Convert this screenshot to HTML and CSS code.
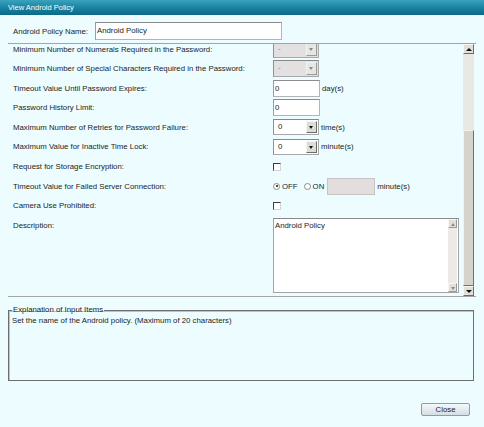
FILE: index.html
```html
<!DOCTYPE html>
<html>
<head>
<meta charset="utf-8">
<link rel="stylesheet" href="styles.css">
</head>
<body>
<div class="window">
  <div class="titlebar">View Android Policy</div>
  <div class="name-row">
    <span class="name-lbl">Android Policy Name:</span>
    <span class="field name-field">Android Policy</span>
  </div>
  <div class="panel">
    <div class="viewport">
      <div class="rows">
        <div class="row"><span class="lbl">Minimum Number of Numerals Required in the Password:</span><span class="sel disabled"><span class="val">-</span><span class="arrow"></span></span></div>
        <div class="row"><span class="lbl">Minimum Number of Special Characters Required in the Password:</span><span class="sel disabled"><span class="val">-</span><span class="arrow"></span></span></div>
        <div class="row"><span class="lbl">Timeout Value Until Password Expires:</span><span class="field num">0</span><span class="unit">day(s)</span></div>
        <div class="row"><span class="lbl">Password History Limit:</span><span class="field num">0</span></div>
        <div class="row"><span class="lbl">Maximum Number of Retries for Password Failure:</span><span class="sel"><span class="val">0</span><span class="arrow"></span></span><span class="unit">time(s)</span></div>
        <div class="row"><span class="lbl">Maximum Value for Inactive Time Lock:</span><span class="sel"><span class="val">0</span><span class="arrow"></span></span><span class="unit">minute(s)</span></div>
        <div class="row"><span class="lbl">Request for Storage Encryption:</span><span class="check"></span></div>
        <div class="row"><span class="lbl">Timeout Value for Failed Server Connection:</span><span class="radio on"></span><span class="rlbl">OFF</span><span class="radio"></span><span class="rlbl">ON</span><span class="field grey"></span><span class="unit">minute(s)</span></div>
        <div class="row"><span class="lbl">Camera Use Prohibited:</span><span class="check"></span></div>
        <div class="row desc-row"><span class="lbl">Description:</span>
          <div class="textarea">
            <div class="ta-text">Android Policy</div>
            <div class="ta-scroll"><span class="sbtn up small"></span><span class="ta-track"></span><span class="sbtn down small"></span></div>
          </div>
        </div>
      </div>
    </div>
    <div class="vscroll">
      <span class="sbtn up"></span>
      <span class="track"></span>
      <span class="thumb"></span>
      <span class="sbtn down"></span>
    </div>
  </div>
  <fieldset class="explain">
    <legend>Explanation of Input Items</legend>
    <p>Set the name of the Android policy. (Maximum of 20 characters)</p>
  </fieldset>
  <div class="actions"><span class="btn">Close</span></div>
</div>
</body>
</html>
```
FILE: styles.css
```css
* { box-sizing: border-box; }
html, body { margin: 0; padding: 0; }
body {
  width: 484px;
  height: 427px;
  overflow: hidden;
  font-family: "Liberation Sans", Arial, sans-serif;
  font-size: 7.8px;
  color: #1c1c1c;
}
.window {
  width: 484px;
  height: 427px;
  background: #ecfcff;
  display: flex;
  flex-direction: column;
}
.titlebar {
  height: 15px;
  flex: none;
  background: linear-gradient(#3aa2bc, #1a84a2 50%, #0b6888);
  color: #fff;
  padding-left: 8px;
  line-height: 15px;
  font-size: 7.5px;
}
.name-row {
  display: flex;
  align-items: center;
  height: 28px;
  padding-top: 7px;
  padding-bottom: 3px;
  padding-left: 13px;
}
.name-lbl { width: 82px; flex: none; }
.field {
  display: inline-block;
  background: #fff;
  border: 1px solid #b4b4b4;
  border-top-color: #8c8c8c;
  border-left-color: #9c9c9c;
  padding-left: 1px;
  line-height: 15px;
}
.name-field { width: 187px; height: 18px; line-height: 16px; }
.panel {
  margin: 0 8px;
  height: 254px;
  flex: none;
  border-top: 1px solid #a4a4a4;
  border-bottom: 1px solid #a4a4a4;
  display: flex;
}
.viewport {
  flex: 1;
  overflow: hidden;
}
.rows { margin-top: -4.8px; }
.row {
  display: flex;
  align-items: center;
  height: 19.6px;
}
.lbl { width: 265px; flex: none; padding-left: 5px; white-space: nowrap; }
.num { width: 47px; height: 17px; }
.unit { margin-left: 2px; }
.sel {
  display: inline-flex;
  width: 46px;
  height: 16px;
  background: #fff;
  border: 1px solid #a8a8a8;
  border-top-color: #888;
  border-left-color: #909090;
}
.sel .val { flex: 1; padding-left: 4px; line-height: 14px; }
.sel .arrow {
  width: 11px;
  margin: 1px 1px 1px 0;
  background: #dedcd6;
  border: 1px solid #f4f4f4;
  border-right-color: #6c6c6c;
  border-bottom-color: #6c6c6c;
  position: relative;
}
.sel .arrow::after {
  content: "";
  position: absolute;
  left: 2px;
  top: 4px;
  border-left: 2.5px solid transparent;
  border-right: 2.5px solid transparent;
  border-top: 3px solid #111;
}
.sel.disabled { height: 17px; background: #e2e0e0; }
.sel.disabled .val { color: #8a8a8a; }
.sel.disabled .arrow { background: #e8e6e2; border-right-color: #9a9a9a; border-bottom-color: #9a9a9a; }
.sel.disabled .arrow::after { border-top-color: #8a8a8a; }
.check {
  width: 8px;
  height: 8px;
  background: #fff;
  border: 1px solid #d4d4d4;
  border-top-color: #3c3c3c;
  border-left-color: #3c3c3c;
}
.radio {
  width: 7px;
  height: 7px;
  border-radius: 50%;
  border: 1px solid #8a8a8a;
  background: #fff;
  position: relative;
}
.radio.on::after {
  content: "";
  position: absolute;
  left: 1.5px;
  top: 1.5px;
  width: 2px;
  height: 2px;
  border-radius: 50%;
  background: #111;
}
.rlbl { margin-left: 2px; margin-right: 6px; }
.grey { width: 48px; height: 17px; margin-left: -3px; background: #e2dede; border-color: #c8c4c4; }
.desc-row { height: auto; align-items: flex-start; }
.desc-row .lbl { line-height: 19.6px; }
.textarea {
  margin-top: 2.4px;
  width: 186px;
  height: 75px;
  background: #fff;
  border: 1px solid #a4a4a4;
  border-top-color: #8a8a8a;
  display: flex;
}
.ta-text { flex: 1; padding: 2px 1px; line-height: 10px; }
.ta-scroll {
  width: 9px;
  margin-right: 1px;
  display: flex;
  flex-direction: column;
  background: #eceae6;
}
.ta-track { flex: 1; }
.vscroll {
  width: 11px;
  margin-right: 2px;
  flex: none;
  display: flex;
  flex-direction: column;
  background: #e8e8e4;
}
.vscroll .track { height: 76px; flex: none; }
.vscroll .thumb {
  flex: 1;
  background: #d6d3cc;
  border: 1px solid #f2f2f0;
  border-right-color: #707070;
  border-bottom-color: #707070;
}
.sbtn {
  display: block;
  height: 10px;
  flex: none;
  background: #e2e0da;
  border: 1px solid #f6f6f6;
  border-right-color: #6c6c6c;
  border-bottom-color: #6c6c6c;
  position: relative;
}
.sbtn::after {
  content: "";
  position: absolute;
  left: 2px;
  top: 3px;
  border-left: 3px solid transparent;
  border-right: 3px solid transparent;
}
.sbtn.up::after { border-bottom: 3px solid #111; }
.sbtn.down::after { border-top: 3px solid #111; }
.sbtn.small { height: 9px; border-right-color: #9a9a9a; border-bottom-color: #9a9a9a; }
.sbtn.small::after { left: 1.5px; border-left-width: 2.5px; border-right-width: 2.5px; }
.sbtn.small.up::after { border-bottom-color: #888; }
.sbtn.small.down::after { border-top-color: #888; }
.explain {
  margin: 7px 10px 0 8px;
  height: 77px;
  padding: 0 0 0 3px;
  border: 1px solid #6e6e6e;
  box-shadow: inset 1px 1px 0 #b8c4c8;
  min-width: 0;
}
.explain legend {
  padding: 0 1px;
  line-height: 12px;
}
.explain p { margin: 0; line-height: 10px; }
.actions {
  display: flex;
  justify-content: flex-end;
  padding-top: 22px;
  padding-right: 14px;
}
.btn {
  width: 49px;
  height: 13px;
  border: 1px solid #8e9ca8;
  border-radius: 2px;
  background: linear-gradient(#f4f8fb, #d4dde4);
  text-align: center;
  line-height: 11px;
  color: #222;
}
```
